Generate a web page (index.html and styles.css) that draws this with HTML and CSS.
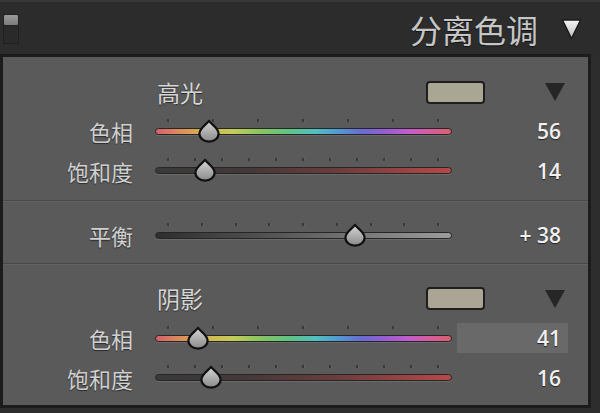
FILE: index.html
```html
<!DOCTYPE html>
<html lang="zh">
<head>
<meta charset="utf-8">
<link rel="stylesheet" href="styles.css">
</head>
<body>
<div class="header">
  <div class="toggle"><span class="toggle-top"></span><span class="toggle-bottom"></span></div>
  <div class="header-title">分离色调</div>
  <svg class="header-tri" width="21" height="22" viewBox="0 0 21 22">
    <defs><linearGradient id="hg" x1="0" y1="0" x2="0" y2="1"><stop offset="0" stop-color="#f4f4f4"/><stop offset="1" stop-color="#bdbdbd"/></linearGradient></defs>
    <polygon points="1.5,2 19.5,2 10.5,20.5" fill="url(#hg)" stroke="#1a1a1a" stroke-width="1.4" stroke-linejoin="round"/>
  </svg>
</div>

<div class="panel">
  <section class="sec sec-a">
    <div class="title-row">
      <span class="sec-title">高光</span>
      <span class="swatch swatch-hi"></span>
      <svg class="sec-tri" width="20" height="18" viewBox="0 0 20 18"><polygon points="0,0 20,0 10,18" fill="#262626"/></svg>
    </div>
    <div class="row">
      <span class="label">色相</span>
      <div class="slider track-hue" style="--p:0.1556">
        <div class="ticks"><i></i><i></i><i></i><i></i><i></i><i></i><i></i></div>
        <svg class="thumb" width="24" height="24" viewBox="0 0 24 24"><use href="#thumbshape"/></svg>
      </div>
      <span class="value">56</span>
    </div>
    <div class="row row-sat">
      <span class="label">饱和度</span>
      <div class="slider track-sat" style="--p:0.14">
        <div class="ticks"><i></i><i></i><i></i><i></i><i></i><i></i><i></i><i></i><i></i><i></i><i></i></div>
        <svg class="thumb" width="24" height="24" viewBox="0 0 24 24"><use href="#thumbshape"/></svg>
      </div>
      <span class="value">14</span>
    </div>
  </section>

  <div class="divider"></div>

  <section class="sec sec-b">
    <div class="row">
      <span class="label">平衡</span>
      <div class="slider track-bal" style="--p:0.69">
        <div class="ticks"><i></i><i></i><i></i><i></i><i></i><i></i><i></i><i></i><i></i></div>
        <svg class="thumb" width="24" height="24" viewBox="0 0 24 24"><use href="#thumbshape"/></svg>
      </div>
      <span class="value">+ 38</span>
    </div>
  </section>

  <div class="divider"></div>

  <section class="sec sec-c">
    <div class="title-row">
      <span class="sec-title">阴影</span>
      <span class="swatch swatch-sh"></span>
      <svg class="sec-tri" width="20" height="18" viewBox="0 0 20 18"><polygon points="0,0 20,0 10,18" fill="#262626"/></svg>
    </div>
    <div class="row">
      <span class="label">色相</span>
      <div class="slider track-hue" style="--p:0.1139">
        <div class="ticks"><i></i><i></i><i></i><i></i><i></i><i></i><i></i></div>
        <svg class="thumb" width="24" height="24" viewBox="0 0 24 24"><use href="#thumbshape"/></svg>
      </div>
      <span class="value value-active">41</span>
    </div>
    <div class="row row-sat">
      <span class="label">饱和度</span>
      <div class="slider track-sat" style="--p:0.16">
        <div class="ticks"><i></i><i></i><i></i><i></i><i></i><i></i><i></i><i></i><i></i><i></i><i></i></div>
        <svg class="thumb" width="24" height="24" viewBox="0 0 24 24"><use href="#thumbshape"/></svg>
      </div>
      <span class="value">16</span>
    </div>
  </section>
</div>

<svg class="defs" width="0" height="0">
  <defs>
    <linearGradient id="tg" x1="0" y1="0" x2="0" y2="1"><stop offset="0" stop-color="#d6d6d6"/><stop offset="1" stop-color="#8a8a8a"/></linearGradient>
    <path id="thumbshape" d="M12 1.8 C13.6 4.6 21.6 9 21.6 14.6 C21.6 19.6 17.2 22.6 12 22.6 C6.8 22.6 2.4 19.6 2.4 14.6 C2.4 9 10.4 4.6 12 1.8 Z" fill="url(#tg)" stroke="#111" stroke-width="2.2" stroke-linejoin="round"/>
  </defs>
</svg>
</body>
</html>
```

FILE: styles.css
```css
* { box-sizing: border-box; }
html, body { margin: 0; padding: 0; }
body {
  width: 600px;
  height: 413px;
  background: #2d2d2d;
  overflow: hidden;
  font-family: "Noto Sans CJK SC", "Noto Sans", sans-serif;
}
.defs { position: absolute; width: 0; height: 0; }

.header {
  height: 54px;
  display: flex;
  align-items: center;
  background: #2c2c2c;
  border-top: 2px solid #383838;
  padding-left: 3px;
}
.toggle {
  width: 16px;
  height: 30px;
  display: flex;
  flex-direction: column;
  margin-top: 1px;
}
.toggle-top {
  height: 12px;
  background: linear-gradient(#9a9a9a, #7c7c7c);
  border: 1px solid #222;
  border-radius: 2px;
}
.toggle-bottom {
  flex: 1;
  background: #2a2a2a;
  border: 1px solid #1f1f1f;
  border-top: none;
}
.header-title {
  margin-left: auto;
  font-size: 32px;
  line-height: 1;
  color: #c6c6c6;
  text-shadow: 0 1px 1px #111;
  margin-top: 2px;
}
.header-tri {
  margin-left: 23px;
  margin-right: 18px;
  margin-top: 2px;
}

.panel {
  margin-right: 9px;
  height: 354px;
  border: 3px solid #1c1c1c;
  background: #5a5a5a;
}
.sec-a { padding: 16px 0 10px; }
.sec-b { padding: 13px 0 8px; }
.sec-c { padding: 14px 0 8px; }

.divider {
  height: 2px;
  border-top: 1px solid #484848;
  border-bottom: 1px solid #636363;
}

.title-row {
  height: 38px;
  display: flex;
  align-items: center;
  padding-left: 154px;
  padding-right: 23px;
}
.sec-c .title-row { height: 39px; }
.sec-title {
  font-size: 23px;
  line-height: 1;
  color: #d6d6d6;
  text-shadow: 0 1px 1px #2a2a2a;
}
.swatch {
  margin-left: auto;
  width: 59px;
  height: 23px;
  border: 2px solid #1e1e1e;
  border-radius: 4px;
}
.swatch-hi { background: #a9a794; }
.swatch-sh { background: #aca494; }
.sec-tri { margin-left: 60px; }

.row {
  height: 40px;
  display: grid;
  grid-template-columns: 152px 297px 116px;
  align-items: center;
}
.row-sat { height: 39px; }

.label {
  text-align: right;
  padding-right: 22px;
  font-size: 22px;
  line-height: 1;
  color: #d0d0d0;
  text-shadow: 0 1px 1px #2a2a2a;
}
.slider {
  position: relative;
  height: 7px;
  border-radius: 4px;
  border: 1px solid #262626;
  box-shadow: 0 1px 0 #6a6a6a;
}
.track-hue {
  background: linear-gradient(to right, #d85f6c 0%, #dc8c5c 8%, #d9b450 16%, #c4cc58 26%, #84c460 36%, #5cc488 46%, #52c0c0 54%, #5298d4 62%, #6a6ad4 70%, #9a5cd4 78%, #c45ccc 86%, #d85c9c 93%, #d8606c 100%);
}
.track-sat {
  background: linear-gradient(to right, #3a3a3a 0%, #443838 30%, #6a3c3c 60%, #b84848 100%);
}
.track-bal {
  background: linear-gradient(to right, #2e2e2e 0%, #555 40%, #9c9c9c 100%);
}
.ticks {
  position: absolute;
  top: -10px;
  left: 11px;
  right: 12px;
  height: 3px;
  display: flex;
  justify-content: space-between;
}
.ticks i {
  display: block;
  width: 2px;
  height: 3px;
  background: #383838;
  box-shadow: 1px 0 0 #626262;
}
.thumb {
  position: absolute;
  top: -10px;
  left: calc(var(--p) * 272px - 1px);
}

.value {
  margin-left: 5px;
  width: 111px;
  height: 30px;
  display: flex;
  align-items: center;
  justify-content: flex-end;
  padding-right: 7px;
  font-family: "Open Sans", "Liberation Sans", sans-serif;
  font-weight: 600;
  font-size: 21px;
  color: #f0f0f0;
  text-shadow: 0 1px 1px #222;
}
.value-active { background: #696969; }
```
